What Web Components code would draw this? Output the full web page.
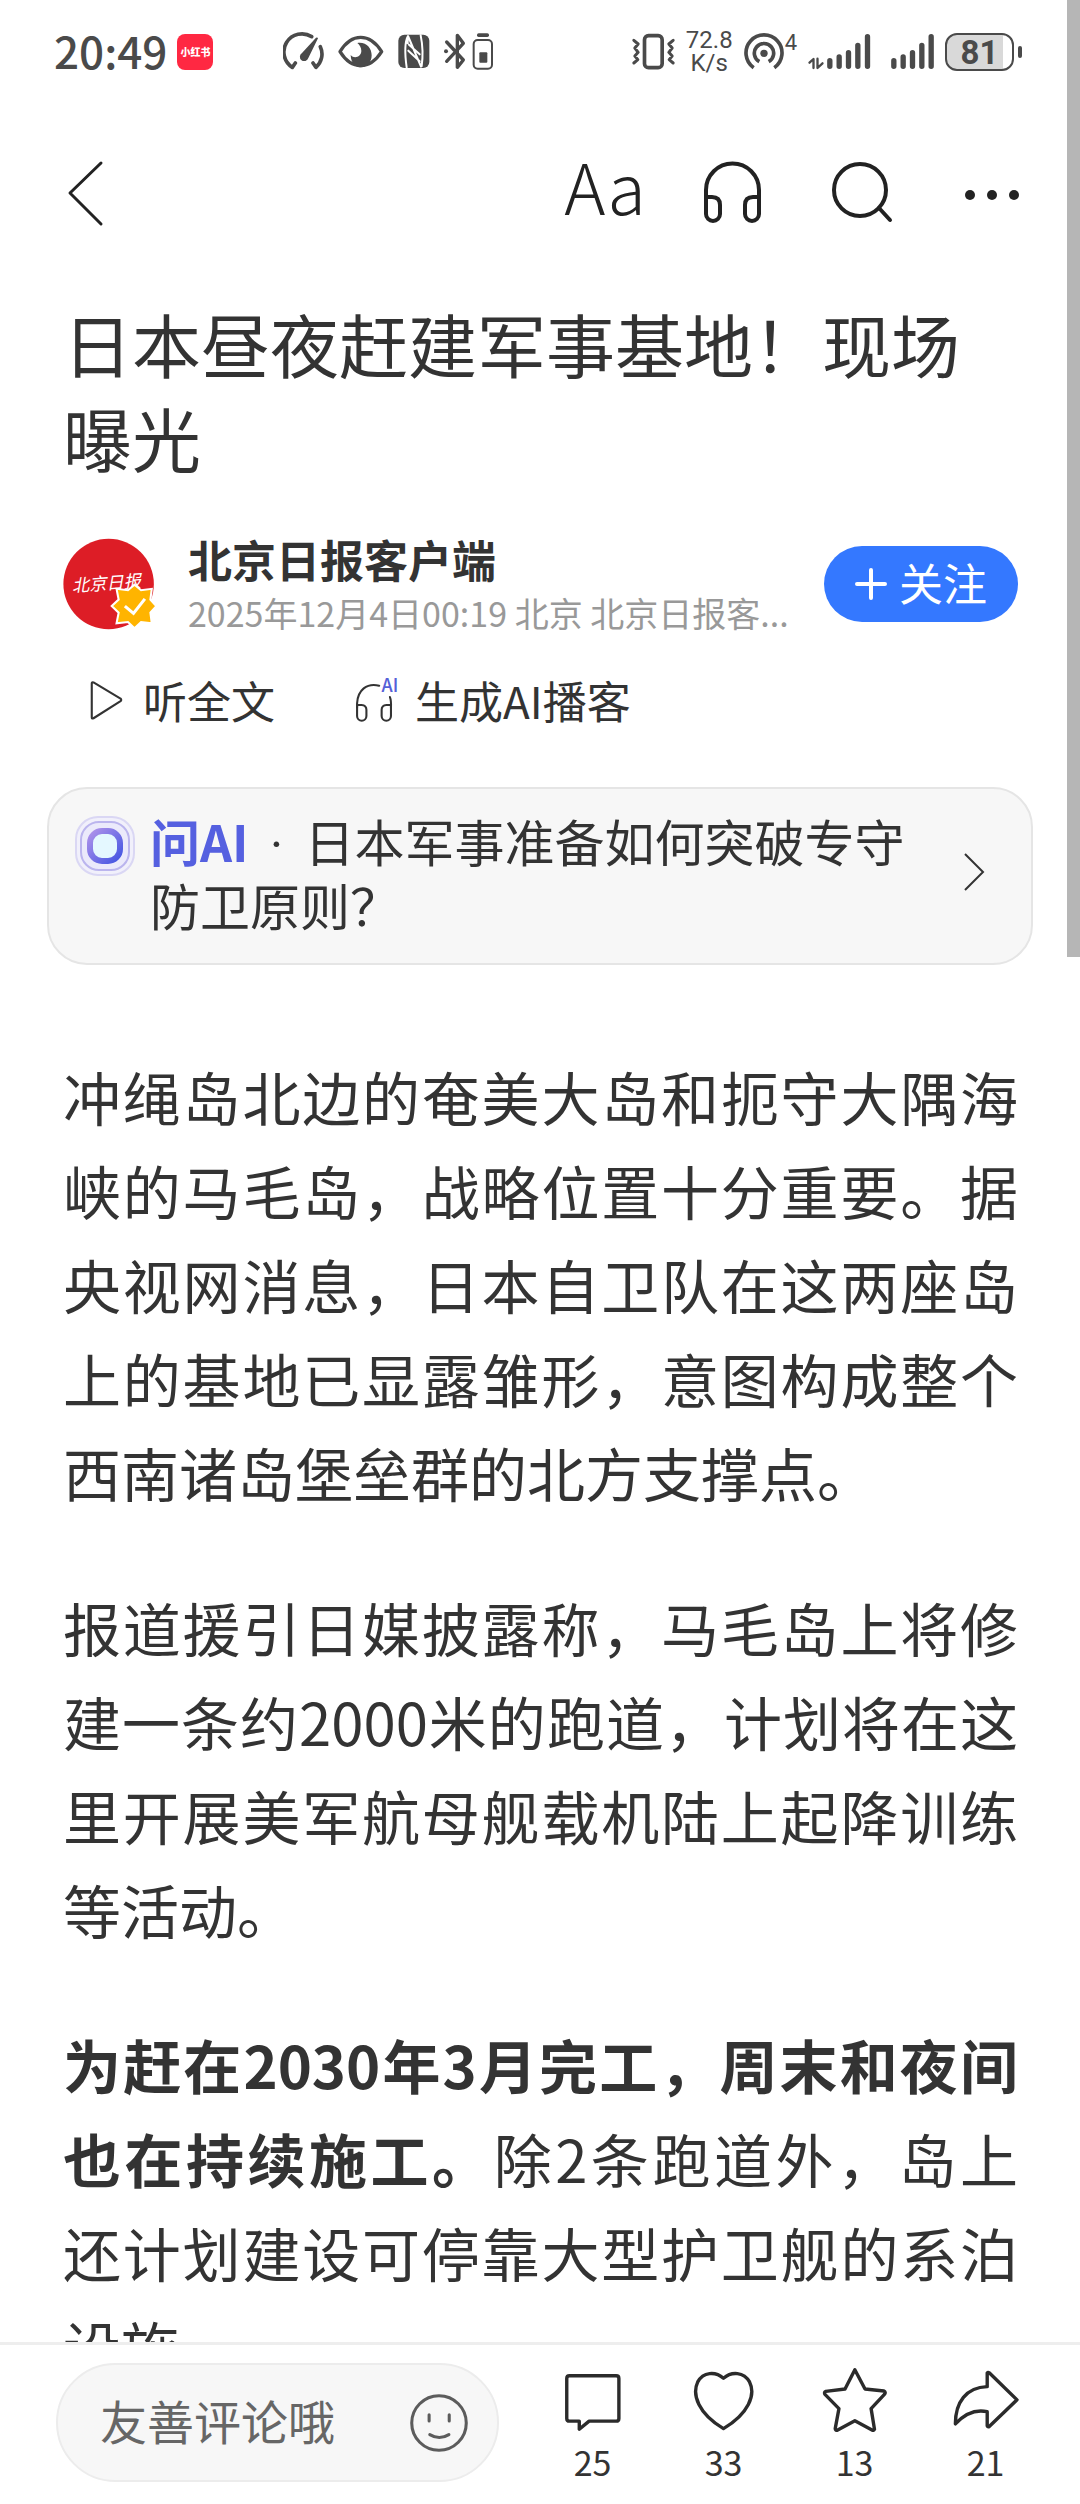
<!DOCTYPE html>
<html lang="zh-CN">
<head>
<meta charset="utf-8">
<meta name="viewport" content="width=device-width, initial-scale=1">
<title>日本昼夜赶建军事基地！现场曝光</title>
<style>
  body {
    margin: 0;
    background: #fff;
    color: #333;
    font-family: "Noto Sans CJK SC", sans-serif;
  }
</style>
</head>
<body>
<app-shell>
  <status-bar slot="top" time="20:49" battery="81"></status-bar>
  <nav-bar slot="top"></nav-bar>

  <article-title>日本昼夜赶建军事基地！现场曝光</article-title>
  <author-row>
    <span slot="name">北京日报客户端</span>
    <span slot="meta">2025年12月4日00:19 北京 北京日报客...</span>
  </author-row>
  <listen-row></listen-row>
  <ask-card>日本军事准备如何突破专守防卫原则？</ask-card>
  <article-body>
    <p>冲绳岛北边的奄美大岛和扼守大隅海峡的马毛岛，战略位置十分重要。据央视网消息，日本自卫队在这两座岛上的基地已显露雏形，意图构成整个西南诸岛堡垒群的北方支撑点。</p>
    <p>报道援引日媒披露称，马毛岛上将修建一条约2000米的跑道，计划将在这里开展美军航母舰载机陆上起降训练等活动。</p>
    <p><strong>为赶在2030年3月完工，周末和夜间也在持续施工。</strong>除2条跑道外，岛上还计划建设可停靠大型护卫舰的系泊设施。</p>
  </article-body>

  <comment-bar slot="bottom">
    <count-button label="评论" count="25">
      <svg viewBox="59 112 186 192"><path d="M84 138H222q8 0 8 8V264q0 8-8 8H142L113 296V272H84q-8 0-8-8V146q0-8 8-8Z"/></svg>
    </count-button>
    <count-button label="点赞" count="33">
      <svg viewBox="441 112 186 192"><path d="M534 145C510 124 474 126 458 156C440 194 460 250 534 294C608 250 630 194 611 156C594 126 558 124 534 145Z"/></svg>
    </count-button>
    <count-button label="收藏" count="13">
      <svg viewBox="816 112 200 192"><path d="M916 120L946 177L1002 183Q1008 186 1004 192L964 235L974 296Q972 300 968 299L916 271L864 299Q858 300 858 294L869 235L827 192Q825 186 830 184L887 177Z"/></svg>
    </count-button>
    <count-button label="分享" count="21">
      <svg viewBox="1196 112 200 192"><path d="M1300 170V130Q1302 126 1306 129L1388 209L1306 288Q1301 290 1300 286V244C1264 236 1234 250 1206 280C1206 216 1238 172 1300 170Z"/></svg>
    </count-button>
  </comment-bar>
</app-shell>

<script>
function makeTemplate(html) {
  const template = document.createElement('template');
  template.innerHTML = html;
  return template;
}

/* ---------- app-shell ---------- */

const shellTemplate = makeTemplate(`
  <style>
    :host {
      display: flex;
      flex-direction: column;
      height: 100vh;
      position: relative;
      overflow: hidden;
    }
    main {
      flex: 1;
      min-height: 0;
      overflow: hidden;
    }
    .thumb {
      position: absolute;
      top: 0;
      right: 0;
      width: 13px;
      height: 957px;
      background: #b6b6b6;
    }
  </style>
  <slot name="top"></slot>
  <main><slot></slot></main>
  <slot name="bottom"></slot>
  <div class="thumb"></div>
`);

class AppShell extends HTMLElement {
  constructor() {
    super();
    this.attachShadow({ mode: 'open' });
    this.shadowRoot.appendChild(shellTemplate.content.cloneNode(true));
  }
}
customElements.define('app-shell', AppShell);

/* ---------- status-bar ---------- */

const statusTemplate = makeTemplate(`
  <style>
    :host {
      display: flex;
      justify-content: space-between;
      height: 104px;
      padding: 0 58px 0 54px;
      color: #4a4a4a;
    }
    .group {
      display: flex;
      align-items: center;
      gap: 10px;
    }
    .time {
      padding-bottom: 4px;
      font-size: 44px;
      font-weight: 500;
      line-height: 56px;
    }
    .app {
      width: 36px;
      height: 36px;
      border-radius: 8px;
      background: #ff2842;
      color: #fff;
      font-size: 10px;
      font-weight: 900;
      line-height: 36px;
      text-align: center;
      white-space: nowrap;
    }
    .system {
      display: flex;
      align-items: center;
      gap: 12px;
      margin-left: 60px;
    }
    svg {
      display: block;
      height: 40px;
      fill: none;
      stroke: currentColor;
      stroke-linecap: round;
      stroke-linejoin: round;
    }
    .solid {
      fill: currentColor;
      stroke: none;
    }
    .pair {
      display: flex;
      gap: 5px;
    }
    .speed {
      font: 24px/23px Roboto, sans-serif;
      text-align: center;
    }
    .hotspot {
      display: flex;
      align-items: flex-start;
      font: 22px/22px Roboto, sans-serif;
    }
    .bars {
      stroke-width: 16px;
    }
    .second {
      margin-left: 8px;
    }
    .battery {
      display: flex;
      align-items: center;
      gap: 4px;
    }
    .cell {
      box-sizing: border-box;
      width: 69px;
      height: 38px;
      border: 2px solid #4a4a4a;
      border-radius: 12px;
      background: linear-gradient(to right, #d9d9d9 86%, #fff 86%);
      font: bold 33px/36px Roboto, sans-serif;
      text-align: center;
    }
    .nub {
      width: 4px;
      height: 12px;
      border-radius: 2px;
      background: #4a4a4a;
    }
  </style>
  <div class="group">
    <span class="time"></span>
    <span class="app">小红书</span>
    <div class="system">
      <svg width="42" viewBox="820 96 122 120" stroke-width="11">
        <path d="M855 189L846 202A53 53 0 0 1 904 110M930 140A53 53 0 0 1 917 202L908 189"/>
        <path class="solid" d="M923 115L894 174A13 13 0 1 1 875 159L917 113Q922 111 923 115Z"/>
      </svg>
      <svg width="48" viewBox="976 96 140 120" stroke-width="10">
        <path d="M983 155C1018 98 1072 98 1108 155C1072 211 1018 211 983 155Z"/>
        <path class="solid" d="M1035 129C1062 125 1078 145 1078 166C1078 187 1064 202 1046 202C1030 202 1016 190 1015 165C1026 178 1047 170 1047 153C1047 143 1042 135 1035 129Z"/>
      </svg>
      <svg width="34" viewBox="1150 96 98 120" stroke-width="6">
        <rect class="solid" x="1152" y="104" width="93" height="100" rx="18"/>
        <path stroke="#fff" d="M1177 202C1171 160 1172 124 1181 108L1220 200M1219 106C1226 140 1226 170 1222 198M1184 134L1216 163M1182 152L1216 184M1180 110V130"/>
      </svg>
      <div class="pair">
        <svg width="24" viewBox="1278 96 70 120" stroke-width="10">
          <path d="M1288 126L1338 180L1320 202V106L1338 130L1288 184"/>
          <circle class="solid" cx="1286" cy="154" r="6"/>
        </svg>
        <svg width="22" viewBox="1358 96 64 120" stroke-width="6">
          <rect x="1362" y="120" width="55" height="86" rx="12"/>
          <rect class="solid" x="1372" y="100" width="36" height="11" rx="5"/>
          <rect class="solid" x="1379" y="157" width="24" height="31" rx="3"/>
        </svg>
      </div>
    </div>
  </div>
  <div class="group">
    <svg width="45" viewBox="274 96 132 120" stroke-width="9">
      <rect x="313" y="107" width="53" height="96" rx="12" stroke-width="11"/>
      <path d="M281 121L294 132L284 144L294 157L284 168L293 179L281 189M399 121L386 132L396 144L386 157L396 168L387 179L399 189"/>
    </svg>
    <div class="speed">72.8<br>K/s</div>
    <div class="hotspot">
      <svg width="42" viewBox="594 96 122 120" stroke-width="11">
        <path stroke-linecap="butt" d="M624 203A54 54 0 1 1 686 203M641 185A29 29 0 1 1 669 185"/>
        <circle class="solid" cx="655" cy="160" r="11"/>
      </svg>
      <span>4</span>
    </div>
    <svg class="bars" width="65" viewBox="766 96 190 120">
      <path stroke-width="7" d="M771 188L783 177V204M795 176V204L810 190"/>
      <path d="M832 182V199M860 171V199M888 158V199M916 136V199M945 110V199"/>
    </svg>
    <svg class="bars second" width="45" viewBox="1010 96 132 120">
      <path d="M1020 182V199M1048 171V199M1076 158V199M1104 136V199M1132 110V199"/>
    </svg>
    <div class="battery"><span class="cell"></span><span class="nub"></span></div>
  </div>
`);

class StatusBar extends HTMLElement {
  constructor() {
    super();
    this.attachShadow({ mode: 'open' });
    this.shadowRoot.appendChild(statusTemplate.content.cloneNode(true));
  }

  connectedCallback() {
    this.shadowRoot.querySelector('.time').textContent = this.getAttribute('time');
    this.shadowRoot.querySelector('.cell').textContent = this.getAttribute('battery');
  }
}
customElements.define('status-bar', StatusBar);

/* ---------- nav-bar ---------- */

const navTemplate = makeTemplate(`
  <style>
    :host {
      display: flex;
      justify-content: space-between;
      align-items: center;
      height: 174px;
      padding: 2px 23px 0 64px;
      color: #222;
    }
    .tools {
      display: flex;
    }
    button {
      display: flex;
      align-items: center;
      justify-content: center;
      height: 96px;
      padding: 0;
      border: 0;
      background: none;
      color: inherit;
      cursor: pointer;
    }
    .tools button {
      width: 130px;
    }
    .tools .font {
      padding: 0 0 16px 6px;
      font: 300 70px/80px "Noto Sans CJK SC Light", "Noto Sans CJK SC", sans-serif;
    }
    svg {
      display: block;
      fill: none;
      stroke: currentColor;
      stroke-width: 4px;
      stroke-linecap: round;
      stroke-linejoin: round;
    }
    .dots {
      fill: currentColor;
      stroke: none;
    }
  </style>
  <button type="button" aria-label="返回">
    <svg width="40" height="68" viewBox="64 160 40 68"><path stroke-width="3" d="M101 164L70 194L101 225"/></svg>
  </button>
  <div class="tools">
    <button type="button" class="font" aria-label="字体大小">Aa</button>
    <button type="button" aria-label="听新闻">
      <svg width="64" height="66" viewBox="700 158 64 66">
        <path d="M706 196V188A26 26 0 0 1 759 188V196"/>
        <path d="M706 195h6q8 0 8 8v9a7 7 0 0 1-14 0zM759 195h-6q-8 0-8 8v9a7 7 0 0 0 14 0z"/>
      </svg>
    </button>
    <button type="button" aria-label="搜索">
      <svg width="64" height="66" viewBox="830 160 64 66"><circle cx="860" cy="190" r="26"/><path d="M879 208L890 220"/></svg>
    </button>
    <button type="button" aria-label="更多">
      <svg class="dots" width="64" height="66" viewBox="960 162 64 66"><circle cx="970" cy="197" r="5"/><circle cx="992" cy="197" r="5"/><circle cx="1014" cy="197" r="5"/></svg>
    </button>
  </div>
`);

class NavBar extends HTMLElement {
  constructor() {
    super();
    this.attachShadow({ mode: 'open' });
    this.shadowRoot.appendChild(navTemplate.content.cloneNode(true));
  }
}
customElements.define('nav-bar', NavBar);

/* ---------- article-title ---------- */

const titleTemplate = makeTemplate(`
  <style>
    :host {
      display: block;
      padding: 16px 62px 0 63px;
    }
    h1 {
      margin: 0;
      font-size: 69px;
      font-weight: 400;
      line-height: 94px;
    }
  </style>
  <h1><slot></slot></h1>
`);

class ArticleTitle extends HTMLElement {
  constructor() {
    super();
    this.attachShadow({ mode: 'open' });
    this.shadowRoot.appendChild(titleTemplate.content.cloneNode(true));
  }
}
customElements.define('article-title', ArticleTitle);

/* ---------- author-row ---------- */

const authorTemplate = makeTemplate(`
  <style>
    :host {
      display: flex;
      align-items: center;
      padding: 49px 62px 0;
    }
    .avatar {
      flex: none;
      display: block;
      margin-right: 30px;
    }
    .who {
      flex: 1;
      min-width: 0;
      display: flex;
      flex-direction: column;
      gap: 6px;
      white-space: nowrap;
    }
    .name {
      font-size: 44px;
      font-weight: 700;
      line-height: 52px;
    }
    .meta {
      color: #999;
      font-size: 34px;
      line-height: 44px;
    }
    button {
      display: flex;
      align-items: center;
      justify-content: center;
      gap: 12px;
      box-sizing: border-box;
      width: 194px;
      height: 76px;
      margin-left: 20px;
      padding: 0;
      border: 0;
      border-radius: 38px;
      background: #3478ff;
      color: #fff;
      font: 400 44px/60px "Noto Sans CJK SC", sans-serif;
      white-space: nowrap;
      cursor: pointer;
    }
    button span {
      padding-bottom: 4px;
    }
    button svg {
      stroke: currentColor;
      stroke-width: 4px;
      stroke-linecap: round;
    }
  </style>
  <svg class="avatar" width="96" height="96" viewBox="180 84 278 278">
    <circle cx="315" cy="223" r="131" fill="#dd1d26"/>
    <text x="210" y="246" fill="#fff" font-size="50" font-style="italic" transform="rotate(-4 210 246)">北京日报</text>
    <path d="M390 225L409 241L440 237L436 268L453 287L436 306L440 337L409 333L390 351L371 333L338 337L344 306L324 287L344 268L338 237L371 241Z" fill="#ffb400" stroke="#fff" stroke-width="6"/>
    <path d="M362 287L387 308L420 266" fill="none" stroke="#fff" stroke-width="9"/>
  </svg>
  <div class="who">
    <div class="name"><slot name="name"></slot></div>
    <div class="meta"><slot name="meta"></slot></div>
  </div>
  <button type="button">
    <svg width="32" height="32" viewBox="0 0 32 32"><path d="M2 16H30M16 2V30"/></svg>
    <span>关注</span>
  </button>
`);

class AuthorRow extends HTMLElement {
  constructor() {
    super();
    this.attachShadow({ mode: 'open' });
    this.shadowRoot.appendChild(authorTemplate.content.cloneNode(true));
  }
}
customElements.define('author-row', AuthorRow);

/* ---------- listen-row ---------- */

const listenTemplate = makeTemplate(`
  <style>
    :host {
      display: flex;
      gap: 80px;
      padding: 35px 62px 0 90px;
    }
    button {
      display: flex;
      align-items: center;
      padding: 0;
      border: 0;
      background: none;
      color: inherit;
      font: 400 44px/60px "Noto Sans CJK SC", sans-serif;
      cursor: pointer;
    }
    svg {
      overflow: visible;
      fill: none;
      stroke: currentColor;
      stroke-width: 6px;
      stroke-linecap: round;
      stroke-linejoin: round;
    }
    .play {
      margin-right: 20px;
    }
    .podcast {
      margin-right: 14px;
    }
    text {
      fill: #5560d8;
      stroke: none;
      font-size: 52px;
      font-weight: 500;
    }
  </style>
  <button type="button">
    <svg class="play" width="33" height="40" viewBox="266 524 94 114"><path d="M271 534Q271 529 276 531L353 577Q357 581 353 584L276 633Q271 635 271 631Z"/></svg>
    <span>听全文</span>
  </button>
  <button type="button">
    <svg class="podcast" width="46" height="46" viewBox="1028 514 133 133">
      <path d="M1034 602V590C1036 552 1062 530 1098 539M1129 572Q1133 582 1132 602"/>
      <path d="M1034 595h13q14 1 14 14v18a13 13 0 0 1-27 0zM1132 595h-13q-14 1-14 14v18a13 13 0 0 0 27 0z"/>
      <text x="1105" y="557">AI</text>
    </svg>
    <span>生成AI播客</span>
  </button>
`);

class ListenRow extends HTMLElement {
  constructor() {
    super();
    this.attachShadow({ mode: 'open' });
    this.shadowRoot.appendChild(listenTemplate.content.cloneNode(true));
  }
}
customElements.define('listen-row', ListenRow);

/* ---------- ask-card ---------- */

const askTemplate = makeTemplate(`
  <style>
    :host {
      display: block;
      padding: 57px 47px 0;
    }
    a {
      display: flex;
      align-items: flex-start;
      padding: 19px 46px 27px 26px;
      border: 2px solid #e5e5e5;
      border-radius: 40px;
      background: #f7f7f7;
      color: inherit;
      font-size: 50px;
      line-height: 64px;
      text-decoration: none;
    }
    .logo {
      flex: none;
      margin: 8px 15px 0 0;
    }
    .text {
      flex: 1;
      padding-right: 40px;
    }
    b {
      color: #5560e0;
      font-weight: 700;
    }
    .dot {
      margin: 0 9px;
      font-family: Roboto, sans-serif;
      line-height: 1;
      white-space: pre;
    }
    .arrow {
      flex: none;
      align-self: center;
      fill: none;
      stroke: #333;
      stroke-width: 2px;
    }
  </style>
  <a href="#ask">
    <svg class="logo" width="60" height="60" viewBox="0 0 60 60">
      <defs>
        <linearGradient id="ring" x1="0" y1="0" x2="1" y2="1">
          <stop offset="0" stop-color="#ae92ea"/>
          <stop offset="1" stop-color="#4456e2"/>
        </linearGradient>
      </defs>
      <rect x="1" y="1" width="58" height="58" rx="22" fill="#f1f0fb" stroke="#dad7f4" stroke-width="2"/>
      <rect x="6" y="6" width="48" height="48" rx="18" fill="#ebeafb" stroke="#bbb5ee" stroke-width="2"/>
      <rect x="15" y="15" width="30" height="30" rx="12" fill="#e4f8ff" stroke="url(#ring)" stroke-width="6"/>
    </svg>
    <span class="text"><b>问AI</b><span class="dot"> · </span><slot></slot></span>
    <svg class="arrow" width="22" height="42" viewBox="0 0 22 42"><path d="M2 3L20 21L2 39"/></svg>
  </a>
`);

class AskCard extends HTMLElement {
  constructor() {
    super();
    this.attachShadow({ mode: 'open' });
    this.shadowRoot.appendChild(askTemplate.content.cloneNode(true));
  }
}
customElements.define('ask-card', AskCard);

/* ---------- article-body ---------- */

const bodyTemplate = makeTemplate(`
  <style>
    :host {
      display: block;
      padding: 84px 62px 0 63px;
      font-size: 58px;
      line-height: 94px;
      text-align: justify;
    }
    ::slotted(p) {
      margin: 0 0 61px;
    }
  </style>
  <slot></slot>
`);

class ArticleBody extends HTMLElement {
  constructor() {
    super();
    this.attachShadow({ mode: 'open' });
    this.shadowRoot.appendChild(bodyTemplate.content.cloneNode(true));
  }
}
customElements.define('article-body', ArticleBody);

/* ---------- comment-bar ---------- */

const commentTemplate = makeTemplate(`
  <style>
    :host {
      display: flex;
      align-items: center;
      gap: 28px;
      padding: 18px 29px 22px 56px;
      border-top: 3px solid #eee;
      background: #fff;
    }
    .field {
      flex: 1;
      min-width: 0;
      box-sizing: border-box;
      display: flex;
      align-items: center;
      height: 119px;
      padding: 0 28px 0 42px;
      border: 2px solid #ececec;
      border-radius: 60px;
      background: #f7f7f7;
    }
    input {
      flex: 1;
      min-width: 0;
      padding: 0 0 6px;
      border: 0;
      outline: 0;
      background: none;
      color: #333;
      font: 400 47px/64px "Noto Sans CJK SC", sans-serif;
    }
    input::placeholder {
      color: #666;
      opacity: 1;
    }
    button {
      padding: 0;
      border: 0;
      background: none;
      cursor: pointer;
    }
    svg {
      display: block;
      fill: none;
      stroke: #5c5c5c;
      stroke-width: 9px;
      stroke-linecap: round;
    }
    .actions {
      display: flex;
      padding-top: 3px;
    }
  </style>
  <div class="field">
    <input type="text" placeholder="友善评论哦" aria-label="评论">
    <button type="button" aria-label="表情">
      <svg width="60" height="60" viewBox="1188 192 176 176"><circle cx="1276" cy="280" r="80"/><path d="M1247 256V274M1306 256V274M1249 314Q1277 331 1305 314"/></svg>
    </button>
  </div>
  <div class="actions"><slot></slot></div>
`);

class CommentBar extends HTMLElement {
  constructor() {
    super();
    this.attachShadow({ mode: 'open' });
    this.shadowRoot.appendChild(commentTemplate.content.cloneNode(true));
  }
}
customElements.define('comment-bar', CommentBar);

/* ---------- count-button ---------- */

const countTemplate = makeTemplate(`
  <style>
    :host {
      display: block;
      width: 131px;
    }
    button {
      display: flex;
      flex-direction: column;
      align-items: center;
      gap: 11px;
      width: 100%;
      padding: 0;
      border: 0;
      background: none;
      color: inherit;
      font: 400 34px/38px "Noto Sans CJK SC", sans-serif;
      cursor: pointer;
    }
    ::slotted(svg) {
      display: block;
      height: 65px;
      fill: none;
      stroke: #2b2b2b;
      stroke-width: 10px;
      stroke-linejoin: round;
    }
  </style>
  <button type="button">
    <slot></slot>
    <span class="count"></span>
  </button>
`);

class CountButton extends HTMLElement {
  constructor() {
    super();
    this.attachShadow({ mode: 'open' });
    this.shadowRoot.appendChild(countTemplate.content.cloneNode(true));
  }

  connectedCallback() {
    this.shadowRoot.querySelector('.count').textContent = this.getAttribute('count');
    this.shadowRoot.querySelector('button').title = this.getAttribute('label');
  }
}
customElements.define('count-button', CountButton);
</script>
</body>
</html>
